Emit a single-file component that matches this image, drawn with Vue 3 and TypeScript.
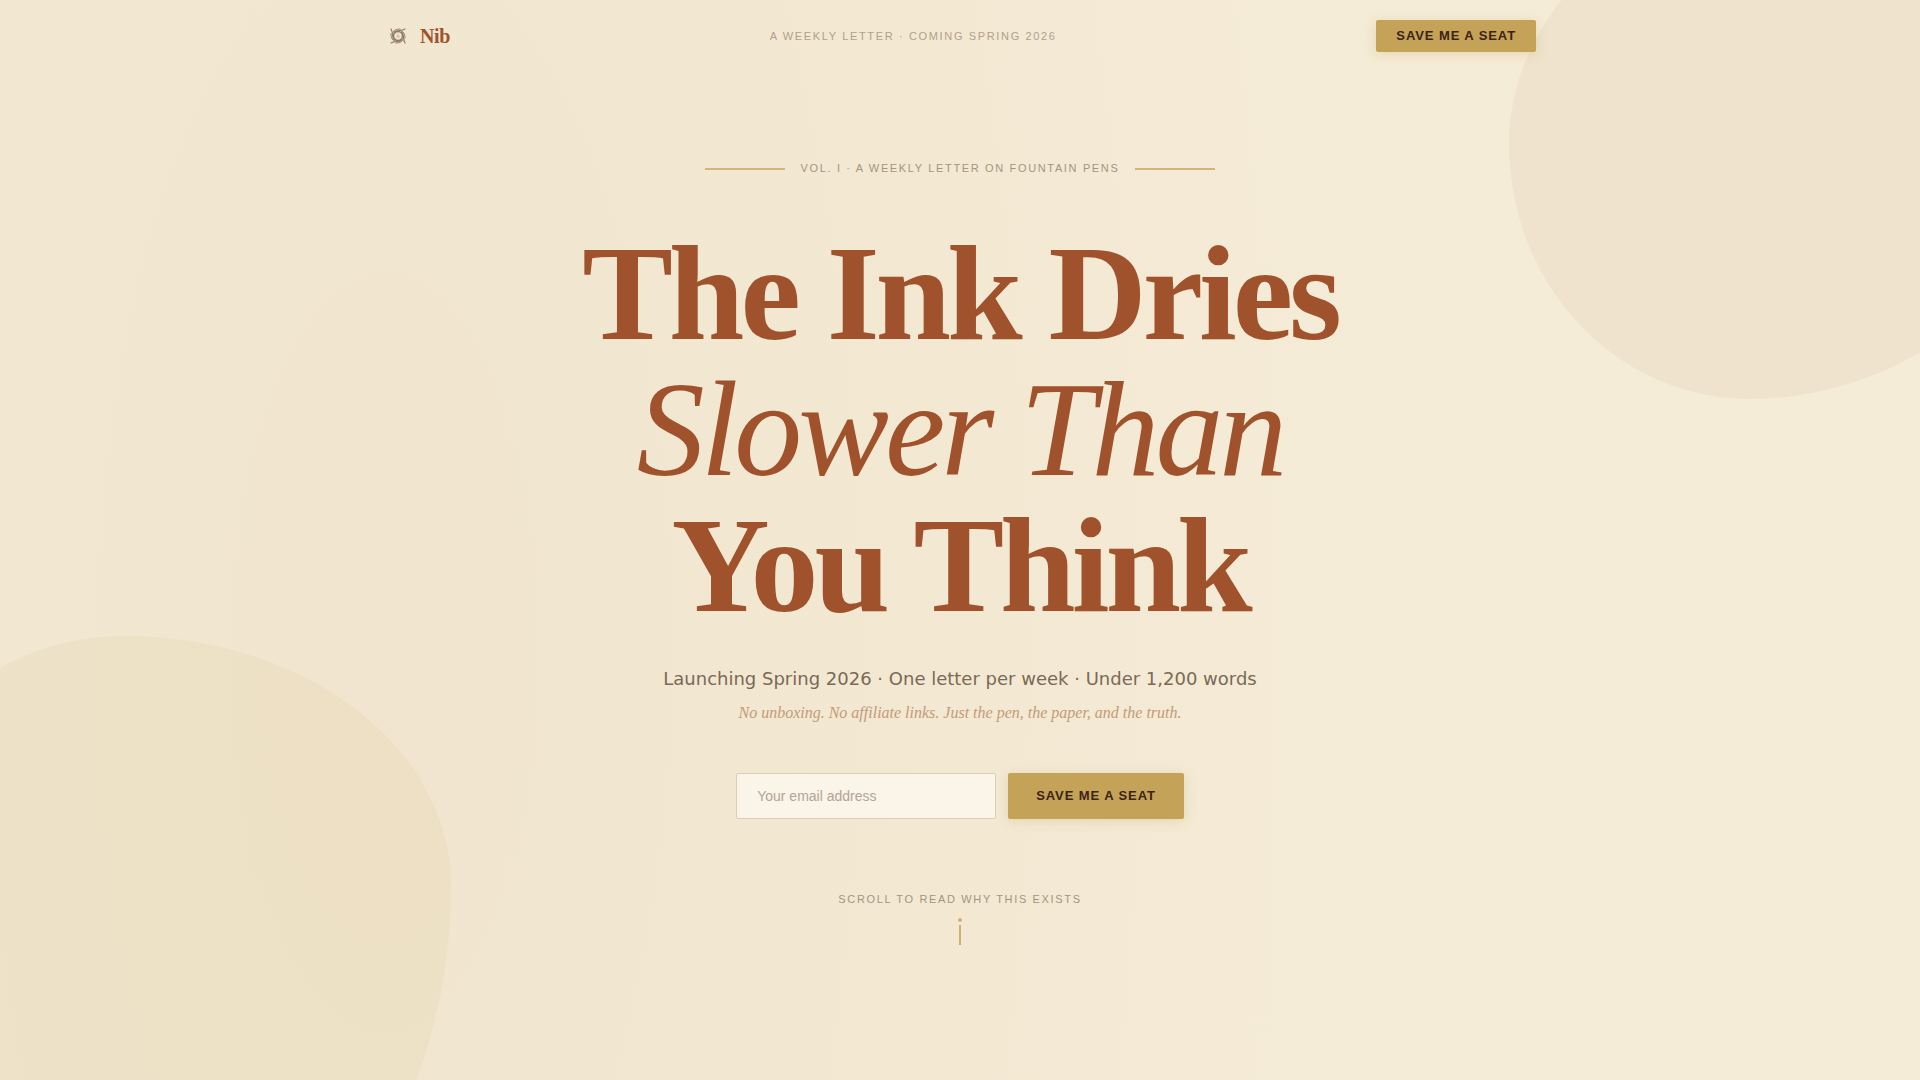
<script setup lang="ts">
import { ref } from 'vue'

const email = ref('')
const quarterTurns = [0, 90, 180, 270]
</script>

<template>
  <div class="page">
    <div class="blob blob-rust" aria-hidden="true"></div>
    <div class="blob blob-gold" aria-hidden="true"></div>

    <header class="nav">
      <a class="brand" href="#">
        <svg class="mark" viewBox="0 0 32 32" aria-hidden="true">
          <circle cx="16" cy="16" r="9" fill="none" stroke="#5c4033" stroke-width="3" />
          <g
            v-for="turn in quarterTurns"
            :key="turn"
            :transform="`rotate(${turn} 16 16)`"
            fill="none"
            stroke="#5c4033"
            stroke-linecap="round"
          >
            <path d="M5 12 C6 5 12 2 20 2" stroke-width="2" />
            <path d="M9 8 C14 3 22 7 30 2" stroke-width="2.4" />
          </g>
          <path d="M16 11 L20 19 H12 Z" fill="#5c4033" opacity="0.35" />
        </svg>
        <span class="brand-name">Nib</span>
      </a>
      <span class="caps">A weekly letter · Coming Spring 2026</span>
      <button class="btn btn-small" type="button">Save me a seat</button>
    </header>

    <main class="hero">
      <div class="eyebrow">
        <span class="rule"></span>
        <span class="caps strong">Vol. I · A weekly letter on fountain pens</span>
        <span class="rule"></span>
      </div>

      <h1 class="title">The Ink Dries<br /><em>Slower Than</em><br />You Think</h1>

      <p class="lead">Launching Spring 2026 · One letter per week · Under 1,200 words</p>
      <p class="aside">No unboxing. No affiliate links. Just the pen, the paper, and the truth.</p>

      <form class="signup" @submit.prevent>
        <input v-model="email" class="field" type="email" placeholder="Your email address" aria-label="Your email address" />
        <button class="btn btn-large" type="submit">Save me a seat</button>
      </form>

      <div class="scroll">
        <span class="caps strong">Scroll to read why this exists</span>
        <svg class="drip" viewBox="0 0 4 28" aria-hidden="true">
          <circle cx="2" cy="2" r="2" fill="#c4a258" opacity="0.8" />
          <rect x="1" y="7" width="2" height="20" fill="#c4a258" opacity="0.8" />
        </svg>
      </div>
    </main>
  </div>
</template>

<style>
body {
  margin: 0;
  background: #f5ecd7;
}
</style>

<style scoped>
.page {
  position: relative;
  display: flex;
  flex-direction: column;
  min-height: 100vh;
  overflow: hidden;
  font-family: "Liberation Sans", Arial, sans-serif;
  background: radial-gradient(ellipse 57% 250% at 20% 60%, rgba(160, 95, 45, 0.05) 0%, rgba(160, 95, 45, 0) 100%), #f5ecd7;
}

.blob {
  position: absolute;
  pointer-events: none;
}

.blob-rust {
  top: -133px;
  right: -189px;
  width: 600px;
  height: 532px;
  border-radius: 360px 240px 360px 240px / 277px 144px 388px 255px;
  background: rgba(160, 82, 45, 0.06);
}

.blob-gold {
  left: -92px;
  bottom: -180px;
  width: 543px;
  height: 624px;
  border-radius: 217px 326px 240px 303px / 175px 249px 375px 449px;
  background: rgba(190, 170, 70, 0.07);
}

.nav {
  position: relative;
  display: flex;
  align-items: center;
  justify-content: space-between;
  box-sizing: border-box;
  width: 100%;
  max-width: 1200px;
  margin: 0 auto;
  padding: 20px 24px;
}

.brand {
  display: flex;
  align-items: center;
  gap: 14px;
  padding-left: 6px;
  color: #a0522d;
  text-decoration: none;
}

.mark {
  width: 16px;
  height: 16px;
  opacity: 0.65;
}

.brand-name {
  font: bold 20px/24px "Liberation Serif", "Times New Roman", serif;
  letter-spacing: -0.02em;
}

.caps {
  font-size: 11px;
  line-height: 17px;
  letter-spacing: 0.15em;
  text-transform: uppercase;
  color: #b0a08a;
}

.caps.strong {
  color: #a39580;
}

.btn {
  border: 0;
  border-radius: 2px;
  font: bold 13px/16px "Liberation Sans", Arial, sans-serif;
  letter-spacing: 0.07em;
  text-transform: uppercase;
  color: #3b2314;
  background: #c4a258;
  box-shadow: 0 2px 12px rgba(196, 162, 88, 0.3);
  cursor: pointer;
}

.btn-small {
  padding: 8px 20px;
}

.btn-large {
  padding: 15px 28px;
}

.hero {
  position: relative;
  display: flex;
  flex-direction: column;
  align-items: center;
  padding: 88px 24px 120px;
  text-align: center;
}

.eyebrow {
  display: flex;
  align-items: center;
  gap: 16px;
}

.rule {
  width: 80px;
  height: 2px;
  background: #d4b37c;
}

.title {
  margin: 48px 0 0;
  font: bold 136px/136px "Liberation Serif", "Times New Roman", serif;
  letter-spacing: -0.03em;
  color: #a0522d;
}

.title em {
  font-weight: normal;
}

.lead {
  margin: 32px 0 0;
  font: 18px/28px "DejaVu Sans", sans-serif;
  color: #7a6a55;
}

.aside {
  margin: 8px 0 0;
  font: italic 16px/24px "Liberation Serif", "Times New Roman", serif;
  color: #c49a78;
}

.signup {
  display: flex;
  gap: 12px;
  margin-top: 48px;
}

.field {
  box-sizing: border-box;
  width: 260px;
  padding: 0 20px;
  border: 1px solid #ddccb6;
  border-radius: 2px;
  font: 14px/20px "Liberation Sans", Arial, sans-serif;
  color: #3b2314;
  background: #faf4e9;
  outline: 0;
}

.field::placeholder {
  color: #b3a595;
}

.scroll {
  display: flex;
  flex-direction: column;
  align-items: center;
  gap: 10px;
  margin-top: 72px;
}

.drip {
  width: 4px;
  height: 28px;
}
</style>
